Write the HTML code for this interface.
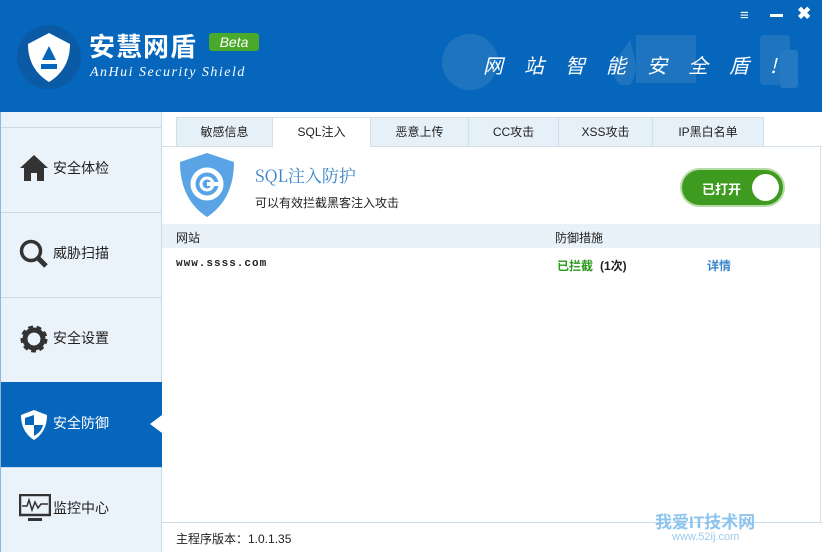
<!DOCTYPE html>
<html><head><meta charset="utf-8"><style>
*{margin:0;padding:0;box-sizing:border-box}
body{width:822px;height:552px;overflow:hidden;background:#fff;font-family:"Liberation Sans","Noto Sans CJK SC",sans-serif;font-size:12px;color:#222;position:relative}
.hdr{position:absolute;left:0;top:0;width:822px;height:112px;background:#0566bb}
.abs{position:absolute}
.side{position:absolute;left:0;top:112px;width:162px;height:440px;background:#eaf3fa;border-left:1px solid #8fb7d8;border-right:1px solid #c9dbe9}
.item{position:absolute;left:0;width:161px;height:85px;border-top:1px solid #cadbe8;font-size:14px;color:#222}
.item span{position:absolute;left:52px;top:30px}
.item svg{position:absolute;left:18px;top:26px}
.tab{position:absolute;top:117px;height:30px;background:#e6f0f8;border:1px solid #d3e0ea;text-align:center;line-height:28px;font-size:12px;color:#222}
</style></head><body>
<div class="hdr"></div>
<svg class="abs" style="left:16px;top:24px" width="66" height="66" viewBox="0 0 66 66"><circle cx="33" cy="33" r="32" fill="#0b5aa6"/><path d="M33 9 L54 20 C54 38 46 50 33 58 C20 50 12 38 12 20 Z" fill="#fff"/><path d="M33 22 L40 36 H26 Z" fill="#0566bb"/><rect x="25" y="40" width="16" height="5" fill="#0566bb"/></svg>
<div class="abs" style="left:89px;top:30px;color:#fff;font-size:26px;font-weight:bold;letter-spacing:1px;font-family:'Noto Sans CJK SC',sans-serif;line-height:32px">安慧网盾</div>
<div class="abs" style="left:209px;top:33px;width:50px;height:18px;background:#4aa82b;border-radius:3px;color:#fff;font-style:italic;font-size:14px;text-align:center;line-height:18px">Beta</div>
<div class="abs" style="left:90px;top:65px;color:#fff;font-style:italic;font-size:14px;letter-spacing:1.5px;font-family:'Liberation Serif',serif">AnHui Security Shield</div>
<svg class="abs" style="left:440px;top:30px" width="360" height="65"><circle cx="30" cy="32" r="28" fill="#1f74c0"/><rect x="196" y="5" width="60" height="48" fill="#1f74c0"/><path d="M180 55 C165 40 180 25 190 10 C195 30 200 40 190 55Z" fill="#1f74c0"/><rect x="320" y="5" width="30" height="50" rx="4" fill="#1f74c0"/><rect x="340" y="20" width="18" height="38" rx="3" fill="#2579c2"/></svg>
<div class="abs" style="left:483px;top:50px;color:#fff;font-size:20px;font-style:italic;letter-spacing:21px;font-family:'Noto Sans CJK SC',sans-serif">网站智能安全盾!</div>
<div class="abs" style="left:740px;top:7px;color:#fff;font-size:15px;font-weight:bold">≡</div>
<div class="abs" style="left:770px;top:14px;width:13px;height:3px;background:#fff"></div>
<div class="abs" style="left:797px;top:4px;color:#fff;font-size:17px;font-weight:bold">✖</div>
<div class="side">
<div class="item" style="top:15px"><svg width="30" height="28" viewBox="0 0 30 28"><path d="M15 1 L29 14 H25 V27 H18 V19 H12 V27 H5 V14 H1 Z" fill="#333"/></svg><span>安全体检</span></div>
<div class="item" style="top:100px"><svg width="30" height="30" viewBox="0 0 30 30"><circle cx="12" cy="12" r="9.5" fill="none" stroke="#333" stroke-width="3.5"/><path d="M19 19 L27 27" stroke="#333" stroke-width="5"/></svg><span>威胁扫描</span></div>
<div class="item" style="top:185px"><svg width="30" height="30" viewBox="0 0 30 30"><circle cx="15" cy="15" r="10" fill="none" stroke="#333" stroke-width="7" stroke-dasharray="4 3"/><circle cx="15" cy="15" r="9" fill="none" stroke="#333" stroke-width="5"/></svg><span>安全设置</span></div>
<div class="item" style="top:270px;background:#0566bb;color:#fff;border-top-color:#0566bb"><svg width="30" height="32" viewBox="0 0 30 32"><path d="M15 1 L28 6 C28 18 23 26 15 31 C7 26 2 18 2 6 Z" fill="#fff"/><path d="M15 6 V16 H24 C23 21 20 24 15 27 V16 H6 V9 Z" fill="#0566bb"/></svg><span>安全防御</span></div>
<div class="item" style="top:355px"><svg width="32" height="30" viewBox="0 0 32 30"><rect x="1" y="1" width="30" height="20" fill="none" stroke="#333" stroke-width="2.5"/><path d="M3 12 H8 L10 6 L13 16 L16 8 L19 14 L22 10 H29" fill="none" stroke="#333" stroke-width="1.5"/><rect x="9" y="24" width="14" height="3" fill="#333"/></svg><span>监控中心</span></div>
</div>
<div class="abs" style="left:150px;top:415px;width:0;height:0;border-top:9px solid transparent;border-bottom:9px solid transparent;border-right:12px solid #fff"></div>
<div class="abs" style="left:162px;top:146px;width:660px;height:1px;background:#d3e0ea"></div>
<div class="tab" style="left:176px;width:97px">敏感信息</div>
<div class="tab" style="left:272px;width:99px;background:#fff;border-bottom-color:#fff;height:31px">SQL注入</div>
<div class="tab" style="left:370px;width:99px">恶意上传</div>
<div class="tab" style="left:468px;width:91px">CC攻击</div>
<div class="tab" style="left:558px;width:95px">XSS攻击</div>
<div class="tab" style="left:652px;width:112px">IP黑白名单</div>
<div class="abs" style="left:820px;top:146px;width:1px;height:376px;background:#d3e0ea"></div>
<svg class="abs" style="left:176px;top:152px" width="62" height="66" viewBox="0 0 62 66"><path d="M31 1 L58 10 C58 36 48 54 31 65 C14 54 4 36 4 10 Z" fill="#5aa4e6"/><circle cx="31" cy="32" r="14" fill="none" stroke="#fff" stroke-width="5"/><circle cx="31" cy="32" r="6" fill="none" stroke="#fff" stroke-width="3"/><rect x="31" y="30" width="14" height="4" fill="#fff"/></svg>
<div class="abs" style="left:255px;top:162px;font-size:17px;color:#3a86c8;font-family:'Noto Serif CJK SC',serif">SQL注入防护</div>
<div class="abs" style="left:255px;top:194px;font-size:12px">可以有效拦截黑客注入攻击</div>
<div class="abs" style="left:682px;top:170px;width:101px;height:35px;border-radius:18px;background:#3e9b1f;box-shadow:0 0 0 2px #b5dca6"></div>
<div class="abs" style="left:702px;top:179px;color:#fff;font-size:13px;font-weight:bold">已打开</div>
<div class="abs" style="left:752px;top:174px;width:27px;height:27px;border-radius:50%;background:#fff"></div>
<div class="abs" style="left:162px;top:224px;width:658px;height:24px;background:#e8f1f8"></div>
<div class="abs" style="left:176px;top:229px">网站</div>
<div class="abs" style="left:555px;top:229px">防御措施</div>
<div class="abs" style="left:176px;top:258px;font-weight:bold;font-size:11px;font-family:'Liberation Mono',monospace;letter-spacing:1px">www.ssss.com</div>
<div class="abs" style="left:557px;top:257px;color:#2a9a1a;font-weight:bold">已拦截</div>
<div class="abs" style="left:600px;top:257px;font-weight:bold">(1次)</div>
<div class="abs" style="left:707px;top:257px;color:#3a86c8;font-weight:bold">详情</div>
<div class="abs" style="left:162px;top:522px;width:660px;height:1px;background:#c9dbe9"></div>
<div class="abs" style="left:176px;top:530px">主程序版本：1.0.1.35</div>
<div class="abs" style="left:655px;top:508px;color:#8cc4ee;font-size:17px;font-weight:bold">我爱IT技术网</div>
<div class="abs" style="left:672px;top:531px;color:#9ccaee;font-size:11px">www.52ij.com</div>
</body></html>
